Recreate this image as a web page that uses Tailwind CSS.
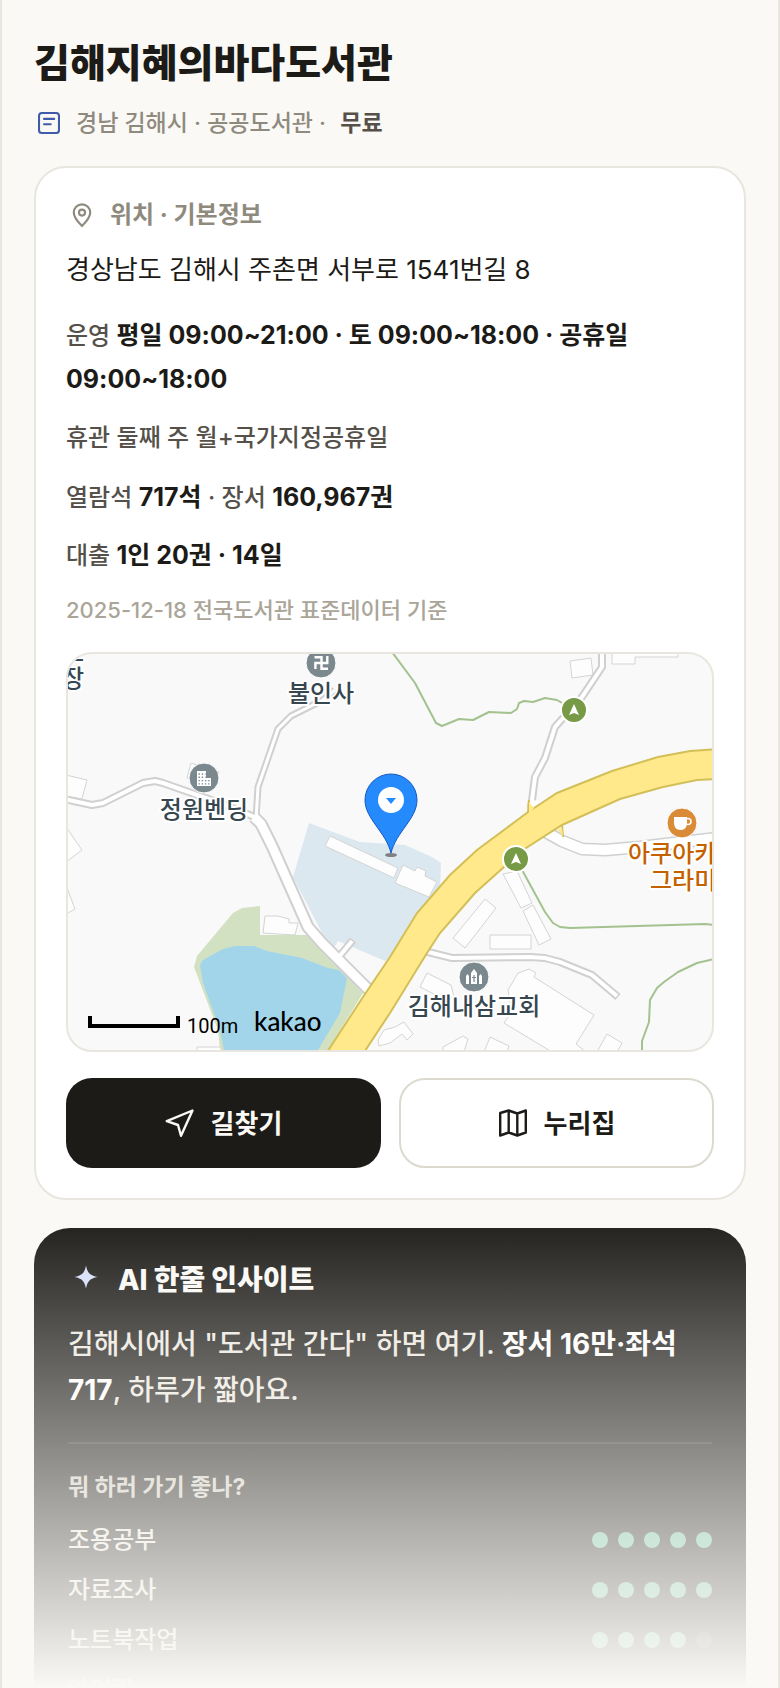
<!DOCTYPE html>
<html lang="ko">
<head>
    <meta charset="UTF-8">
    <meta name="viewport" content="width=device-width, initial-scale=1.0">
    <title>김해지혜의바다도서관</title>
    <script src="https://cdn.jsdelivr.net/npm/@tailwindcss/browser@4"></script>
</head>
<body class="bg-[#faf9f5] font-['Inter','Noto_Sans_CJK_KR',sans-serif] font-medium text-[#1c1b17]">
    <main class="relative h-screen overflow-hidden border-x-2 border-[#e9e6df] px-8 pt-10">
        <h1 class="text-[39px] leading-[46px] font-extrabold">김해지혜의바다도서관</h1>
        <div class="mt-[18px] flex h-[38px] items-center gap-3 text-[23px] text-[#8f8a7e]">
            <span class="flex w-[30px] justify-center">
                <svg class="size-[26px]" viewBox="0 0 24 24" fill="none" stroke="#3f5ba9" stroke-width="1.9" stroke-linecap="round">
                    <rect x="2.8" y="2.8" width="18.4" height="18.4" rx="2.6" />
                    <path d="M7.4 8.2h9.4M7.4 13.2h6.2" />
                </svg>
            </span>
            <p>경남 김해시 · 공공도서관 · <strong class="ml-2 font-bold text-[#55514a]">무료</strong></p>
        </div>

        <!-- Location card -->
        <section class="mt-6 rounded-[32px] border-2 border-[#e9e6df] bg-white px-[30px] pt-8 pb-[30px]">
            <h2 class="flex h-[30px] items-center gap-3 text-2xl font-bold text-[#8f8a7e]">
                <span class="flex w-8 justify-center">
                    <svg class="size-[26px]" viewBox="0 0 24 24" fill="none" stroke="currentColor" stroke-width="2" stroke-linejoin="round">
                        <path d="M12 22.2c-2.6-2.6-7.6-7.3-7.6-12.4a7.6 7.6 0 0 1 15.2 0c0 5.1-5 9.8-7.6 12.4z" />
                        <circle cx="12" cy="9.8" r="2.8" />
                    </svg>
                </span>
                위치 · 기본정보
            </h2>
            <p class="mt-5 text-[26px] leading-10 font-normal">경상남도 김해시 주촌면 서부로 1541번길 8</p>
            <div class="text-2xl leading-[44px] text-[#55514a]">
                <p class="mt-6">운영 <strong class="text-[25px] leading-10 font-bold text-[#1c1b17]">평일 09:00~21:00 · 토 09:00~18:00 · 공휴일 09:00~18:00</strong></p>
                <p class="mt-3.5">휴관 둘째 주 월+국가지정공휴일</p>
                <p class="mt-4">열람석 <strong class="text-[25px] leading-10 font-bold text-[#1c1b17]">717석</strong> · 장서 <strong class="text-[25px] leading-10 font-bold text-[#1c1b17]">160,967권</strong></p>
                <p class="mt-3.5">대출 <strong class="text-[25px] leading-10 font-bold text-[#1c1b17]">1인 20권 · 14일</strong></p>
            </div>
            <p class="mt-4 text-[22px] leading-8 text-[#aaa598]">2025-12-18 전국도서관 표준데이터 기준</p>

            <!-- Map -->
            <div class="mt-[26px] h-[400px] overflow-hidden rounded-[26px] border-2 border-[#e9e6df] bg-[#f9f9f9]">
                <svg class="size-full" viewBox="68 654 644 396" preserveAspectRatio="xMidYMid slice" role="img" aria-label="지도">
                    <path fill="#d1e1c2" d="M260 906V935H313L363 993L328 1050H220L218 1030L194 967L197 956L233 913L242 908Z" />
                    <path fill="#a3d5ea" d="M200 965L203 960L223 949L235 946H254L267 951L302 958L328 968L339 970L347 978L340 1013L318 1050H224L220 1030L203 983Z" />
                    <path fill="#dce8f0" d="M309 823L360 842L405 845L432 857L441 863L440 890L390 957L385 961L338 941L334 948L322 933L293 877Z" />
                    <g fill="#fdfdfd" stroke="#d4d4d4">
                        <path d="M330 836L398 868L394 878L325 846Z" />
                        <path d="M403 865L415 871L417 867L426 871L425 876L437 882L429 897L395 883Z" />
                        <path d="M503 874L517 871L532 903L521 908Z" />
                        <path d="M523 911L533 905L551 939L539 945Z" />
                        <path d="M485 899L496 908L465 948L453 938Z" />
                        <path d="M490 935H531V949H490Z" />
                        <path d="M427 973L451 985L454 997H440L420 987Z" />
                        <path d="M518 973L529 969L536 973L534 977L594 1015L576 1044L586 1052H552L504 1023L512 1012L508 990Z" />
                        <path d="M607 1034L622 1043L617 1052H597Z" />
                        <path d="M490 1037L509 1046L507 1052H484Z" />
                        <path d="M443 1047L463 1036L468 1039L464 1052H443Z" />
                        <path d="M378 1040L384 1030L395 1027L404 1022L413 1034L407 1040L402 1034L390 1043L379 1046Z" />
                        <path d="M265 916H278L289 919V923H298L295 935L263 933Z" />
                        <path d="M197 1047H221V1053H197Z" />
                        <path d="M66 775L87 780L82 799L66 796Z" />
                        <path d="M66 827L82 850L66 862Z" />
                        <path d="M66 885L75 909L66 914Z" />
                        <path d="M191 763L219 772L214 788L187 778Z" />
                        <path d="M570 661L591 658L593 675L572 678Z" />
                        <path d="M612 652V664H635V657H678V652Z" />
                    </g>
                    <!-- minor roads: grey casing, then white core -->
                    <g fill="none" stroke="#d0d0d0" stroke-linejoin="round">
                        <path stroke-width="8" d="M64 799L92 805L103 803L143 783L155 781L163 783L220 803L257 818" />
                        <path stroke-width="13" d="M254 817L261 824L272 846L308 927L322 943L372 993" />
                        <path stroke-width="7" d="M256 818L258 787L278 729L291 716L323 700L335 690" />
                        <path stroke-width="8" d="M602 650V667L582 697L555 727L545 758L535 777L531 808" />
                        <path stroke-width="13" d="M535 826L562 841L582 849L605 850L640 847L716 838" />
                        <path stroke-width="8" d="M424 951L452 958L530 957L545 958L560 962L592 975L618 997" />
                        <path stroke-width="8" d="M338 958L353 940" />
                    </g>
                    <g fill="none" stroke="#fff" stroke-linejoin="round">
                        <path stroke-width="4" d="M64 799L92 805L103 803L143 783L155 781L163 783L220 803L257 818" />
                        <path stroke-width="9" d="M254 817L261 824L272 846L308 927L322 943L372 993" />
                        <path stroke-width="3" d="M256 820L258 787L278 729L291 716L323 700L335 690" />
                        <path stroke-width="4" d="M602 650V667L582 697L555 727L545 758L535 777L531 808" />
                        <path stroke-width="10" d="M535 826L562 841L582 849L605 850L640 847L716 838" />
                        <path stroke-width="4" d="M424 951L452 958L530 957L545 958L560 962L592 975L617 996" />
                        <path stroke-width="4" d="M338 958L352 941" />
                    </g>
                    <path fill="#fff" d="M529 800L544 801L550 810L528 816Z" />
                    <path fill="none" stroke="#d6bf52" stroke-width="2" d="M528 812L529 800M562 825L563 837" />
                    <g fill="none" stroke="#a3c28f" stroke-width="2" stroke-linejoin="round">
                        <path d="M392 652L415 683L436 723L442 726L459 719L473 720L489 712L511 713L517 709L519 703L524 701L533 702L545 698L557 700L562 703" />
                        <path d="M521 868L545 912L553 923L560 927L570 928L705 924L714 925" />
                        <path d="M714 959L697 963L678 972L664 982L657 988L650 1000L649 1022L642 1041V1052" />
                    </g>
                    <!-- highway -->
                    <path fill="#ffe98a" stroke="#d3bf58" stroke-width="2" d="M720 749L690 751L658 757L612 771L557 793L528 812L477 850L450 875L417 913L390 957L363 997L320 1063H357L390 1013L427 953L440 933L475 893L523 850L562 825L620 799L663 787L697 780L720 779Z" />
                    <path fill="#ffe98a" d="M529 802L534 808L529 814ZM562 828L563 836L557 829Z" />

                    <!-- place markers -->
                    <g stroke="#fff">
                        <circle cx="321" cy="663" r="15" fill="#7b898f" />
                        <circle cx="204" cy="778" r="15" fill="#7b898f" />
                        <circle cx="474" cy="977" r="15" fill="#7b898f" />
                        <circle cx="682" cy="823" r="15" fill="#da8b37" />
                        <circle cx="574" cy="710" r="13" fill="#769a45" stroke-width="2" />
                        <circle cx="516" cy="859" r="13" fill="#769a45" stroke-width="2" />
                    </g>
                    <path fill="none" stroke="#fff" stroke-width="2.4" d="M314.500 657.200H321.500V668.800H328M315.400 669V663H327.300V656" />
                    <path fill="#fff" d="M197 771h9v7h5v8h-14z" />
                    <path fill="none" stroke="#7b898f" stroke-width="1.4" stroke-dasharray="1.400 1.800" d="M198.500 774h7M198.500 777.300h7M198.500 780.600h11M198.500 783.900h11" />
                    <path fill="#fff" d="M574 704l5 11-5-2-5 2zM516 853l5 11-5-2-5 2z" />
                    <path fill="#fff" d="M674 817h13v5c0 5-2 8-6.500 8s-6.500-3-6.500-8z" />
                    <circle cx="688" cy="821.5" r="3" fill="none" stroke="#fff" stroke-width="1.600" />
                    <path fill="#fff" d="M471 984v-11l3-4 3 4v11zM466 984v-8l1.500-2 1.500 2v8zM479 984v-8l1.500-2 1.500 2v8z" />
                    <path stroke="#7b898f" stroke-width="1.200" d="M474 975v7M472 977.500h4" />

                    <g class="text-2xl font-medium" fill="#37474f" stroke="#fff" stroke-width="4" stroke-linejoin="round" paint-order="stroke">
                        <text x="62" y="661">스</text>
                        <text x="62" y="687">장</text>
                        <text x="321" y="702" text-anchor="middle">불인사</text>
                        <text x="204" y="818" text-anchor="middle">정원벤딩</text>
                        <text x="474" y="1015" text-anchor="middle">김해내삼교회</text>
                        <text x="628" y="862" fill="#c46200">아쿠아카</text>
                        <text x="650" y="889" fill="#c46200">그라미</text>
                    </g>

                    <!-- selected place -->
                    <ellipse cx="391" cy="855" rx="6" ry="2" fill="#555" opacity=".7" />
                    <path fill="#258bfc" stroke="#1659c5" d="M391 853C386 832 365 819 365 800a26 26 0 0 1 52 0C417 819 396 832 391 853Z" />
                    <circle cx="391" cy="800" r="13" fill="#fff" />
                    <path fill="#258bfc" d="M386 798h10l-5 6z" />

                    <path fill="none" stroke="#000" stroke-width="4" d="M90 1016V1026H178V1016" />
                    <text class="font-['Roboto',sans-serif] text-xl font-normal" x="187" y="1033">100m</text>
                    <text class="font-['Lato',sans-serif] text-[26px]" x="254" y="1031">kakao</text>
                </svg>
            </div>

            <div class="mt-[26px] grid grid-cols-2 gap-[18px] text-[26px] font-bold">
                <button type="button" class="flex h-[90px] items-center justify-center gap-4 rounded-[26px] bg-[#1c1b17] text-[#faf9f5]">
                    <svg class="size-[30px]" viewBox="0 0 30 30" fill="none" stroke="currentColor" stroke-width="2.400" stroke-linejoin="round">
                        <path d="M27.500 2.500L1.800 13.200L13 17L16 27.800Z" />
                    </svg>
                    길찾기
                </button>
                <a href="#" class="flex h-[90px] items-center justify-center gap-4 rounded-[26px] border-2 border-[#dcd9cf] bg-white">
                    <svg class="size-[30px]" viewBox="0 0 30 30" fill="none" stroke="currentColor" stroke-width="2.400" stroke-linejoin="round">
                        <path d="M2.200 5L10.700 2.500L19.300 5.500L27.800 2.500V24.500L19.300 27.500L10.700 24.500L2.200 27.500ZM10.700 2.500V24.500M19.300 5.500V27.500" />
                    </svg>
                    누리집
                </a>
            </div>
        </section>

        <!-- AI insight -->
        <section class="mt-7 rounded-[36px] bg-[#1c1b17] px-[34px] pt-8 pb-10 text-[#faf9f5]">
            <h2 class="flex h-10 items-center gap-3.5 text-[28px] font-extrabold">
                <span class="flex h-[34px] w-9 items-center justify-center self-start">
                    <svg class="size-6" viewBox="0 0 24 24" fill="#d5def9"><path d="M12 .5C13.500 8 16 10.500 23.500 12C16 13.500 13.500 16 12 23.500C10.500 16 8 13.500 .5 12C8 10.500 10.500 8 12 .5Z" /></svg>
                </span>
                AI 한줄 인사이트
            </h2>
            <p class="mt-[21px] text-[28px] leading-[46px] text-[#ece9e0]">김해시에서 "도서관 간다" 하면 여기. <strong class="font-bold text-white">장서 16만·좌석 717</strong>, 하루가 짧아요.</p>
            <hr class="mt-[29px] border-t-2 border-white/10">
            <h3 class="mt-[27px] text-[23px] leading-8 font-bold text-[#d0ccc0]">뭐 하러 가기 좋나?</h3>
            <ul class="mt-5 space-y-4 text-2xl leading-[34px] text-[#ece9e0]">
                <li class="flex items-center justify-between">
                    조용공부
                    <span class="flex gap-2.5">
                        <i class="size-4 rounded-full bg-[#67bc9c]"></i>
                        <i class="size-4 rounded-full bg-[#67bc9c]"></i>
                        <i class="size-4 rounded-full bg-[#67bc9c]"></i>
                        <i class="size-4 rounded-full bg-[#67bc9c]"></i>
                        <i class="size-4 rounded-full bg-[#67bc9c]"></i>
                    </span>
                </li>
                <li class="flex items-center justify-between">
                    자료조사
                    <span class="flex gap-2.5">
                        <i class="size-4 rounded-full bg-[#67bc9c]"></i>
                        <i class="size-4 rounded-full bg-[#67bc9c]"></i>
                        <i class="size-4 rounded-full bg-[#67bc9c]"></i>
                        <i class="size-4 rounded-full bg-[#67bc9c]"></i>
                        <i class="size-4 rounded-full bg-[#67bc9c]"></i>
                    </span>
                </li>
                <li class="flex items-center justify-between">
                    노트북작업
                    <span class="flex gap-2.5">
                        <i class="size-4 rounded-full bg-[#67bc9c]"></i>
                        <i class="size-4 rounded-full bg-[#67bc9c]"></i>
                        <i class="size-4 rounded-full bg-[#67bc9c]"></i>
                        <i class="size-4 rounded-full bg-[#67bc9c]"></i>
                        <i class="size-4 rounded-full bg-white/15"></i>
                    </span>
                </li>
                <li class="flex items-center justify-between">
                    아이랑
                </li>
            </ul>
        </section>

        <!-- Fade to the page background -->
        <div class="pointer-events-none absolute inset-x-0 bottom-0 h-[480px] bg-linear-to-b from-[#faf9f5]/0 to-[#faf9f5]"></div>
    </main>
</body>
</html>
